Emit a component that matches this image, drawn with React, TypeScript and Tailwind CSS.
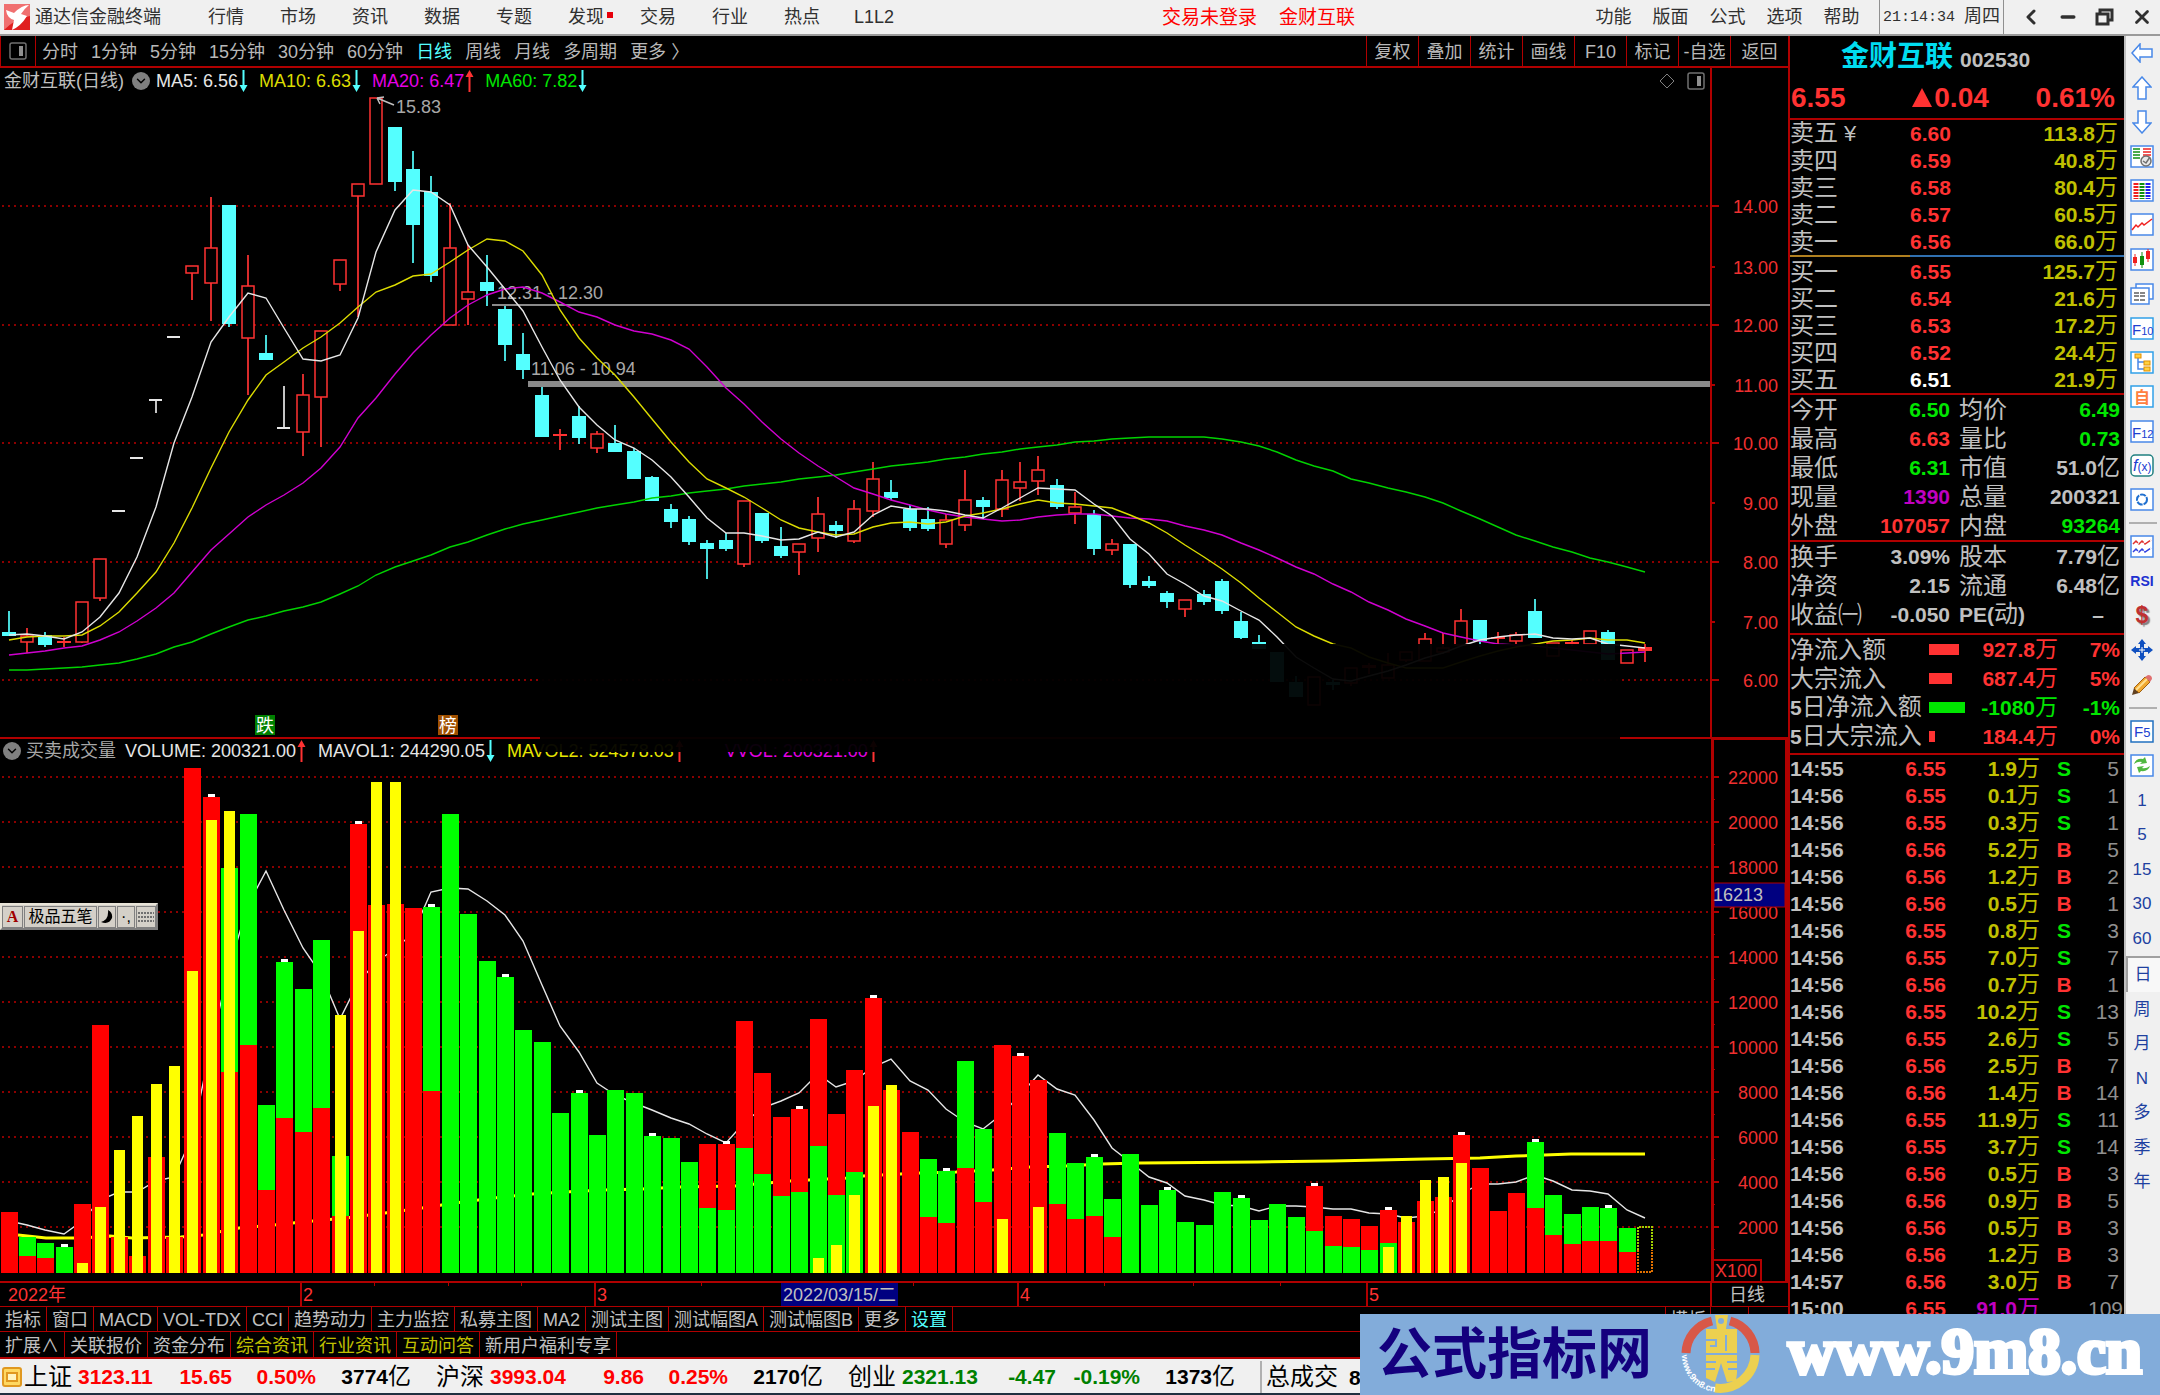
import type { ReactNode } from "react"
import { ChevronDown, ChevronLeft, Minus, X } from "lucide-react"

const RED = "#ff3232"
const CYAN = "#54ffff"
const FRAME = "#b00000"
const SANS = "'Liberation Sans', 'Noto Sans CJK SC', sans-serif"

const barX = (i: number) => Math.round(8.5 + 18.39 * i)

// [kind, body top, body bottom, high, low]; kind: u = up, d = down, f = flat up, w = limit day
type Candle = [string, number, number, number, number]
const candles: Candle[] = [
  ["d", 632, 636, 611, 636], ["u", 636, 642, 628, 653], ["d", 635, 645, 632, 647], ["f", 641, 643, 637, 647],
  ["u", 602, 642, 602, 643], ["u", 559, 598, 559, 601], ["w", 511, 511, 511, 511], ["w", 458, 458, 458, 458],
  ["w", 400, 400, 400, 413], ["w", 337, 337, 337, 337], ["u", 266, 273, 266, 300], ["u", 248, 283, 197, 321],
  ["d", 205, 324, 205, 327], ["u", 286, 338, 255, 395], ["d", 353, 360, 335, 360], ["w", 428, 428, 386, 428],
  ["u", 395, 432, 374, 456], ["u", 331, 397, 331, 447], ["u", 260, 284, 260, 291], ["u", 184, 196, 184, 317],
  ["u", 98, 184, 98, 184], ["d", 127, 182, 127, 191], ["d", 169, 225, 151, 263], ["d", 192, 276, 176, 282],
  ["u", 248, 325, 203, 325], ["u", 292, 299, 245, 325], ["d", 282, 291, 255, 306], ["d", 309, 345, 306, 361],
  ["d", 354, 370, 333, 379], ["d", 395, 437, 387, 437], ["f", 434, 436, 429, 450], ["d", 416, 438, 406, 444],
  ["u", 434, 448, 431, 453], ["d", 443, 452, 425, 452], ["d", 451, 479, 448, 479], ["d", 477, 501, 476, 501],
  ["d", 509, 522, 504, 528], ["d", 519, 542, 516, 545], ["d", 543, 549, 540, 579], ["d", 540, 549, 533, 551],
  ["u", 501, 564, 501, 567], ["d", 513, 541, 513, 543], ["d", 546, 556, 527, 558], ["u", 544, 552, 544, 575],
  ["u", 514, 538, 497, 552], ["d", 525, 531, 521, 538], ["u", 509, 541, 500, 543], ["u", 479, 511, 462, 517],
  ["d", 492, 498, 480, 500], ["d", 509, 528, 505, 531], ["d", 519, 529, 507, 531], ["u", 520, 544, 514, 548],
  ["u", 500, 525, 470, 531], ["d", 500, 507, 497, 519], ["u", 480, 509, 470, 517], ["u", 482, 488, 462, 501],
  ["u", 470, 481, 456, 495], ["d", 485, 507, 479, 509], ["u", 507, 513, 492, 524], ["d", 514, 549, 510, 555],
  ["u", 544, 550, 539, 555], ["d", 544, 585, 544, 588], ["d", 581, 586, 576, 588], ["d", 593, 602, 591, 608],
  ["u", 600, 609, 600, 617], ["d", 594, 602, 590, 605], ["d", 581, 611, 579, 614], ["d", 621, 638, 612, 639],
  ["d", 642, 649, 635, 649], ["d", 652, 682, 652, 682], ["d", 682, 697, 676, 697], ["u", 677, 705, 677, 705],
  ["d", 682, 685, 680, 690], ["u", 668, 683, 668, 686], ["f", 665, 668, 663, 674], ["u", 665, 678, 653, 678],
  ["u", 652, 660, 652, 662], ["u", 639, 661, 633, 661], ["u", 648, 652, 633, 654], ["u", 621, 645, 609, 646],
  ["d", 620, 641, 620, 647], ["f", 637, 639, 632, 644], ["u", 635, 641, 632, 644], ["d", 611, 638, 599, 638],
  ["u", 643, 656, 643, 656], ["f", 642, 644, 640, 646], ["u", 631, 644, 631, 644], ["d", 632, 660, 630, 660],
  ["u", 650, 663, 650, 663], ["f", 647, 651, 644, 662],
]

const ma5 = [
  635, 634, 636, 639, 632, 617, 593, 557, 507, 443, 397, 342, 317, 293, 298, 328, 359, 361, 355, 318, 252, 210, 190,
  192, 205, 245, 267, 289, 311, 347, 380, 407, 425, 440, 448, 460, 477, 497, 518, 533, 533, 536, 540, 539, 532, 537,
  532, 515, 506, 509, 509, 511, 515, 518, 508, 498, 488, 489, 490, 504, 516, 539, 554, 574, 584, 596, 601, 611, 620,
  637, 657, 668, 679, 681, 676, 671, 665, 658, 653, 646, 640, 637, 635, 634, 638, 639, 638, 644, 646, 648,
]
const ma10 = [
  640, 637, 636, 636, 635, 626, 612, 593, 572, 543, 508, 468, 432, 400, 375, 362, 348, 337, 323, 307, 292, 285, 276,
  274, 262, 250, 239, 241, 251, 275, 310, 338, 358, 375, 397, 419, 442, 462, 479, 488, 497, 508, 520, 528, 532, 535,
  534, 527, 523, 522, 524, 522, 516, 513, 509, 504, 500, 503, 504, 506, 508, 515, 523, 533, 545, 557, 569, 583, 598,
  612, 627, 636, 644, 648, 657, 663, 668, 668, 668, 662, 656, 651, 647, 644, 641, 640, 638, 640, 640, 643,
]
const ma20 = [
  655, 653, 651, 648, 646, 640, 632, 621, 608, 593, 572, 550, 534, 517, 505, 495, 483, 468, 447, 418, 398, 374, 353,
  335, 318, 305, 295, 289, 287, 293, 302, 312, 317, 325, 331, 334, 340, 349, 367, 388, 404, 422, 439, 453, 466, 477,
  488, 494, 500, 505, 510, 514, 517, 519, 521, 520, 517, 515, 514, 514, 516, 518, 519, 521, 526, 530, 535, 543, 550,
  558, 567, 574, 584, 592, 602, 610, 619, 626, 633, 637, 641, 644, 645, 646, 648, 650, 652, 654, 653, 652,
]
const ma60 = [
  670, 670, 669, 668, 667, 665, 663, 659, 654, 647, 642, 634, 627, 620, 616, 611, 607, 602, 594, 586, 575, 567, 561,
  555, 547, 542, 535, 529, 524, 520, 516, 512, 508, 505, 502, 498, 496, 493, 491, 489, 486, 484, 482, 479, 477, 475,
  472, 469, 466, 464, 462, 459, 457, 454, 452, 449, 447, 445, 442, 441, 439, 438, 437, 437, 437, 437, 439, 442, 446,
  452, 460, 466, 471, 479, 483, 488, 492, 497, 503, 511, 519, 527, 535, 541, 547, 552, 558, 562, 567, 572,
]

// [colour, total, lower part (opposite colour), yellow part]
type Bar = [string, number, number, number]
const volumes: Bar[] = [
  ["r", 61, 0, 0], ["g", 36, 17, 0], ["g", 30, 15, 0], ["g", 26, 0, 0], ["r", 69, 0, 10], ["r", 248, 0, 66],
  ["r", 36, 0, 123], ["r", 17, 0, 157], ["r", 116, 0, 189], ["r", 36, 0, 207], ["r", 505, 0, 302], ["r", 476, 0, 453],
  ["g", 405, 201, 462], ["g", 459, 228, 0], ["g", 168, 83, 0], ["g", 311, 155, 0], ["g", 284, 141, 0],
  ["g", 333, 165, 0], ["g", 117, 57, 258], ["r", 449, 0, 342], ["r", 368, 0, 491], ["r", 369, 0, 491],
  ["r", 365, 0, 0], ["g", 366, 182, 0], ["g", 459, 0, 0], ["g", 359, 0, 0], ["g", 312, 0, 0], ["g", 296, 0, 0],
  ["g", 243, 0, 0], ["g", 231, 0, 0], ["g", 160, 0, 0], ["g", 180, 0, 0], ["g", 138, 0, 0], ["g", 183, 0, 0],
  ["g", 180, 0, 0], ["g", 137, 0, 0], ["g", 135, 0, 0], ["g", 111, 0, 0], ["r", 129, 65, 0], ["r", 129, 63, 0],
  ["r", 252, 125, 0], ["r", 200, 99, 0], ["r", 156, 77, 0], ["r", 164, 81, 0], ["r", 254, 127, 15],
  ["r", 159, 78, 28], ["r", 203, 101, 78], ["r", 275, 0, 167], ["r", 183, 0, 188], ["r", 141, 0, 0],
  ["g", 114, 56, 0], ["g", 102, 50, 0], ["g", 212, 105, 0], ["g", 144, 71, 0], ["r", 228, 0, 54], ["r", 217, 0, 0],
  ["r", 193, 0, 66], ["g", 140, 69, 0], ["g", 110, 54, 0], ["g", 116, 57, 0], ["g", 74, 36, 0], ["g", 119, 0, 0],
  ["g", 68, 0, 0], ["g", 83, 0, 0], ["g", 51, 0, 0], ["g", 48, 0, 0], ["g", 81, 0, 0], ["g", 75, 0, 0],
  ["g", 53, 0, 0], ["g", 69, 0, 0], ["g", 56, 0, 0], ["r", 87, 42, 0], ["r", 57, 27, 0], ["r", 54, 26, 0],
  ["r", 47, 23, 0], ["r", 63, 30, 26], ["r", 51, 0, 57], ["r", 72, 0, 93], ["r", 76, 0, 96], ["r", 138, 0, 110],
  ["r", 105, 0, 0], ["r", 62, 0, 0], ["r", 80, 0, 0], ["g", 131, 65, 0], ["g", 78, 38, 0], ["g", 59, 29, 0],
  ["g", 66, 32, 0], ["g", 65, 32, 0], ["g", 45, 21, 0],
]
// every fourth bar carries a white marker on its top
const marked = (i: number) => i % 4 === 3 && volumes[i][3] <= volumes[i][1]

const mavol1 = [
  52, 48, 43, 39, 52, 73, 81, 81, 92, 96, 136, 228, 305, 368, 402, 363, 325, 299, 254, 290, 311, 324, 340, 381, 385,
  384, 372, 358, 332, 288, 247, 221, 190, 178, 170, 163, 155, 149, 139, 130, 150, 165, 172, 180, 199, 186, 192, 206,
  214, 192, 183, 164, 151, 144, 159, 178, 198, 184, 178, 153, 125, 111, 96, 90, 77, 73, 68, 67, 62, 67, 67, 66, 64,
  64, 60, 59, 55, 57, 64, 79, 89, 89, 91, 98, 92, 83, 82, 79, 63, 55,
]
const mavol2 =
  "18,1235 46,1238 82,1238 110,1236 132,1238 181,1237 203,1235 239,1228 274,1225 302,1222 346,1218 385,1213 422,1208 455,1203 494,1198 532,1194 565,1192 603,1190 642,1189 680,1187 735,1186 790,1181 827,1179 848,1178 863,1176 881,1175 920,1173 956,1172 992,1170 1030,1167 1066,1166 1101,1164 1140,1163 1258,1162 1332,1161 1425,1159 1480,1158 1516,1156 1571,1154 1645,1154"

const priceScale: [string, number][] = [
  ["14.00", 206], ["13.00", 267], ["12.00", 325], ["11.00", 385], ["10.00", 443], ["9.00", 503], ["8.00", 562],
  ["7.00", 622], ["6.00", 680],
]

function Line({ ys, color }: { ys: number[]; color: string }) {
  return <polyline points={ys.map((y, i) => `${barX(i)},${y}`).join(" ")} fill="none" stroke={color} strokeWidth="1.4" />
}

function CandleShape({ candle, index }: { candle: Candle; index: number }) {
  const [kind, top, bottom, high, low] = candle
  const x = barX(index)
  const color = kind === "w" ? "#e6e6e6" : kind === "d" ? CYAN : RED
  return (
    <g>
      {low > high && <rect x={x - 1} y={high} width="2" height={low - high} fill={color} opacity="0.85" />}
      {kind === "u" ? (
        <rect x={x - 6} y={top} width="12" height={Math.max(bottom - top, 2)} fill="#000" stroke={color} strokeWidth="1.5" />
      ) : (
        <rect x={x - 7} y={kind === "w" ? top - 1 : top} width={kind === "w" ? 13 : 14} height={Math.max(bottom - top, 2)} fill={color} />
      )}
    </g>
  )
}

function PriceChart() {
  return (
    <svg viewBox="0 94 1788 643" className="block w-full" fontFamily={SANS} fontSize="18">
      {priceScale.map(([label, y], i) => (
        <g key={label}>
          {i % 2 === 0 && <line x1="2" x2="1711" y1={y} y2={y} stroke={FRAME} strokeWidth="2" strokeDasharray="2 4" opacity="0.8" />}
          <rect x="1711" y={y - 1} width={i % 2 === 0 ? 8 : 4} height="2" fill={FRAME} />
          <text x="1778" y={y + 7} fill="#f03030" textAnchor="end">{label}</text>
        </g>
      ))}
      <rect x="1710" y="94" width="2" height="643" fill={FRAME} />
      <rect x="492" y="304" width="1218" height="2" fill="#8a8a8a" />
      <rect x="528" y="381" width="1182" height="6" fill="#8a8a8a" />
      {candles.map((c, i) => (
        <CandleShape key={i} candle={c} index={i} />
      ))}
      <text x="497" y="299" fill="#a8a8a8">12.31 - 12.30</text>
      <text x="531" y="375" fill="#a8a8a8">11.06 - 10.94</text>
      <Line ys={ma60} color="#00d200" />
      <Line ys={ma20} color="#d000d0" />
      <Line ys={ma10} color="#dcdc00" />
      <Line ys={ma5} color="#e6e6e6" />
      <path d="M394 105 L377 98 M377 98 L384 97 M377 98 L380 104" stroke="#c0c0c0" strokeWidth="1.5" fill="none" />
      <text x="396" y="113" fill="#a8a8a8">15.83</text>
      <rect x="255" y="715" width="20" height="20" fill="#008000" />
      <text x="256" y="732" fill="#fff">跌</text>
      <rect x="438" y="715" width="20" height="20" fill="#a05000" />
      <text x="439" y="732" fill="#fff">榜</text>
    </svg>
  )
}

const months: [string, number][] = [["2", 301], ["3", 595], ["4", 1018], ["5", 1367]]

function VolumeChart() {
  const base = 1273
  return (
    <svg viewBox="0 762 1788 545" className="block w-full" fontFamily={SANS} fontSize="18">
      {Array.from({ length: 11 }, (_, i) => {
        const y = 777 + 45 * i
        return (
          <g key={i}>
            <line x1="2" x2="1711" y1={y} y2={y} stroke={FRAME} strokeWidth="2" strokeDasharray="2 4" opacity="0.8" />
            <rect x="1713" y={y - 1} width="6" height="2" fill={FRAME} />
            <rect x="1713" y={y + 22} width="2" height="1" fill={FRAME} />
            <text x="1778" y={y + 7} fill="#f03030" textAnchor="end">{22000 - 2000 * i}</text>
          </g>
        )
      })}
      <Line ys={mavol1.map((h) => base - h)} color="#e6e6e6" />
      <polyline points={mavol2} fill="none" stroke="#ffff00" strokeWidth="3" />
      <g shapeRendering="crispEdges">
        {volumes.map(([color, total, lower, hot], i) => {
          const x = barX(i) - 8
          const main = color === "r" ? "#ff0000" : "#00ff00"
          const other = color === "r" ? "#00ff00" : "#ff0000"
          return (
            <g key={i}>
              <rect x={x} y={base - total} width="17" height={total} fill={main} />
              <rect x={x} y={base - lower} width="17" height={lower} fill={other} />
              <rect x={x + 3} y={base - hot} width="11" height={hot} fill="#ffff00" />
              {marked(i) && <rect x={x + 5} y={base - total - 3} width="7" height="3" fill="#fff" />}
            </g>
          )
        })}
      </g>
      <g fill="none" strokeWidth="2" strokeDasharray="2 1">
        <path d="M1638 1250 V1227 H1652 V1250" stroke="#a0d000" />
        <path d="M1638 1250 V1272 H1652 V1250" stroke="#e07000" />
      </g>
      <g fill={FRAME}>
        <rect x="1711" y="762" width="3" height="520" />
        <rect x="1785" y="762" width="3" height="520" />
        <rect x="0" y="1281" width="1788" height="2" />
        <rect x="0" y="1306" width="1788" height="1" />
        <rect x="1710" y="1281" width="2" height="26" />
        <rect x="1713" y="1259" width="48" height="2" />
        <rect x="1760" y="1259" width="2" height="22" />
        {[374, 448, 521, 701, 913, 1104, 1193, 1280].map((x) => (
          <rect key={x} x={x} y="1283" width="1" height="3" />
        ))}
        {months.map(([label, x]) => (
          <rect key={label} x={x - 1} y="1283" width="2" height="23" />
        ))}
      </g>
      <text x="1715" y="1277" fill="#f03030">X100</text>
      <rect x="1714" y="883" width="71" height="24" fill="#000080" stroke={FRAME} />
      <text x="1713" y="901" fill="#c0c0c0">16213</text>
      <text x="8" y="1301" fill={RED}>2022年</text>
      {months.map(([label, x]) => (
        <text key={label} x={x + 2} y="1301" fill={RED}>{label}</text>
      ))}
      <rect x="781" y="1283" width="117" height="23" fill="#000080" />
      <text x="783" y="1301" fill="#c0c0c0">2022/03/15/二</text>
      <text x="1729" y="1301" fill="#c0c0c0">日线</text>
    </svg>
  )
}

function Arrow({ up }: { up?: boolean }) {
  return (
    <svg width="9" height="24" viewBox="0 0 9 24" className={up ? "ml-[1px] shrink-0 text-[#ff3232]" : "ml-[1px] shrink-0 rotate-180 text-[#54ffff]"}>
      <path d="M3.5 8 V23 H5.5 V8 H8.5 L4.5 1 L0.5 8 Z" fill="currentColor" />
    </svg>
  )
}

function LegendDot() {
  return (
    <button aria-label="指标菜单" className="flex size-[18px] shrink-0 items-center justify-center rounded-full bg-[#808080] text-black">
      <ChevronDown size={14} strokeWidth={2.5} />
    </button>
  )
}

function PanelGlyph() {
  return (
    <svg width="18" height="18" viewBox="0 0 18 18" fill="none" stroke="#707070" strokeWidth="1.5">
      <rect x="1" y="1" width="16" height="16" rx="2" />
      <rect x="10" y="4" width="4" height="10" fill="#909090" stroke="none" />
    </svg>
  )
}

const menus = ["行情", "市场", "资讯", "数据", "专题", "发现", "交易", "行业", "热点", "L1L2"]

function TitleBar() {
  return (
    <header className="flex h-[36px] items-center border-b-2 border-[#9a9a9a] bg-[#f0f0f0] text-[18px] text-[#303030]">
      <svg width="26" height="26" viewBox="0 0 26 26" className="ml-[4px] shrink-0">
        <rect width="26" height="26" fill="#e02020" />
        <path d="M0 0 H26 V12 Q12 14 0 26 Z" fill="#f07070" />
        <path d="M2 6 L10 9 Q18 1 25 1 Q20 5 17 10 L23 12 Q17 22 8 26 L10 16 Q3 14 2 6 Z" fill="#fff" />
      </svg>
      <span className="w-[160px] shrink-0 pl-[5px]">通达信金融终端</span>
      <nav className="flex">
        {menus.map((m) => (
          <button key={m} className="relative w-[72px]">
            {m}
            {m === "发现" && <span className="absolute right-[9px] top-[4px] size-[6px] bg-red-600" />}
          </button>
        ))}
      </nav>
      <div className="flex flex-1 justify-center gap-[22px] pl-[22px] text-[19px] text-[#ff0000]">
        <span>交易未登录</span>
        <span>金财互联</span>
      </div>
      <nav className="flex">
        {["功能", "版面", "公式", "选项", "帮助"].map((m) => (
          <button key={m} className="w-[57px]">{m}</button>
        ))}
      </nav>
      <time className="ml-[9px] flex h-full w-[125px] items-center justify-center whitespace-nowrap border-x border-[#909090] font-[Liberation_Mono,Noto_Sans_CJK_SC,monospace] text-[15px]">
        21:14:34&nbsp;<span className="text-[18px]">周四</span>
      </time>
      <div className="ml-[8px] flex">
        <button aria-label="后退" className="flex w-[37px] justify-center"><ChevronLeft size={24} strokeWidth={3} /></button>
        <button aria-label="最小化" className="flex w-[37px] items-center justify-center"><Minus size={20} strokeWidth={4} /></button>
        <button aria-label="还原" className="flex w-[37px] items-center justify-center">
          <svg width="19" height="18" viewBox="0 0 19 18" fill="none" stroke="#303030" strokeWidth="3">
            <path d="M5 5 V2 H17 V12 H14" />
            <rect x="2" y="6" width="11" height="10" />
          </svg>
        </button>
        <button aria-label="关闭" className="flex w-[37px] items-center justify-center"><X size={22} strokeWidth={3} /></button>
      </div>
    </header>
  )
}

const periods = ["分时", "1分钟", "5分钟", "15分钟", "30分钟", "60分钟", "日线", "周线", "月线", "多周期", "更多 〉"]
const chartTools = ["复权", "叠加", "统计", "画线", "F10", "标记", "-自选", "返回"]

function PeriodBar() {
  return (
    <div className="flex h-[32px] border-b-2 border-[#b00000] text-[18px] text-[#b8b8b8]">
      <button aria-label="侧栏" className="flex w-[36px] items-center justify-center border-x border-[#b00000]">
        <PanelGlyph />
      </button>
      <div className="flex flex-1 items-center gap-[13px] whitespace-nowrap pl-[6px] pt-[2px]">
        {periods.map((p) => (
          <button key={p} className={p === "日线" ? "text-[#54ffff]" : ""}>{p}</button>
        ))}
      </div>
      <div className="flex">
        {chartTools.map((t) => (
          <button key={t} className="w-[52px] whitespace-nowrap border-l border-[#b00000] pt-[2px] last:w-[58px]">{t}</button>
        ))}
      </div>
    </div>
  )
}

function Charts() {
  return (
    <section className="relative">
      <div className="flex h-[26px] text-[18px]">
        <div className="flex flex-1 items-center border-r-2 border-[#b00000] pl-[4px]">
          <span className="mr-[8px] text-[#c0c0c0]">金财互联(日线)</span>
          <LegendDot />
          <span className="ml-[6px] text-[#e6e6e6]">MA5: 6.56</span>
          <Arrow />
          <span className="ml-[11px] text-[#dcdc00]">MA10: 6.63</span>
          <Arrow />
          <span className="ml-[11px] text-[#e600e6]">MA20: 6.47</span>
          <Arrow up />
          <span className="ml-[11px] text-[#00e600]">MA60: 7.82</span>
          <Arrow />
          <div className="ml-auto mr-[5px] flex items-center gap-[12px]">
            <svg width="16" height="16" viewBox="0 0 16 16" fill="none" stroke="#808080"><path d="M8 1 L15 8 L8 15 L1 8 Z" /></svg>
            <PanelGlyph />
          </div>
        </div>
        <div className="w-[76px]" />
      </div>
      <PriceChart />
      <div className="flex h-[25px] border-t-2 border-[#b00000] text-[18px]">
        <div className="flex flex-1 items-center pl-[3px]">
          <LegendDot />
          <span className="ml-[5px] text-[#a8a8a8]">买卖成交量</span>
          <span className="ml-[9px] text-[#e6e6e6]">VOLUME: 200321.00</span>
          <Arrow up />
          <span className="ml-[12px] text-[#e6e6e6]">MAVOL1: 244290.05</span>
          <Arrow />
          <span className="ml-[12px] text-[#e6e600]">MAVOL2: 524578.03</span>
          <Arrow up />
          <span className="ml-[41px] text-[#e600e6]">VVOL: 200321.00</span>
          <Arrow up />
        </div>
        <div className="w-[77px] border-x-3 border-t border-[#b00000]" />
      </div>
      <VolumeChart />
      {/* dark veil over the lower part of the price pane */}
      <div className="pointer-events-none absolute left-[540px] top-[576px] h-[108px] w-[1080px] bg-black/95" />
      {/* input method bar */}
      <div className="absolute left-0 top-[835px] flex h-[27px] w-[158px] items-center gap-[1px] border-2 border-[#e8e4d8] border-b-[#808080] border-r-[#808080] bg-[#d4d0c8] text-[16px] text-black">
        <button className="w-[21px] border border-[#808080] font-[Liberation_Serif,serif] font-bold leading-[20px] text-[#a00000]">A</button>
        <button className="flex-1 whitespace-nowrap border border-[#808080] leading-[20px]">极品五笔</button>
        <button aria-label="半角" className="flex h-[22px] w-[18px] items-center justify-center border border-[#808080]">
          <svg width="12" height="14" viewBox="0 0 12 14"><path d="M7 0 Q12 3 11 8 Q8 15 0 12 Q8 10 7 0 Z" /></svg>
        </button>
        <button className="w-[18px] border border-[#808080] leading-[20px]">·,</button>
        <button aria-label="软键盘" className="flex h-[22px] w-[20px] items-center justify-center border border-[#808080]">
          <svg width="16" height="12" viewBox="0 0 16 12" stroke="#707070" strokeWidth="2" strokeDasharray="2 1"><path d="M0 2 H16 M0 6 H16 M0 10 H16" /></svg>
        </button>
      </div>
    </section>
  )
}

const tabs = ["指标", "窗口", "MACD", "VOL-TDX", "CCI", "趋势动力", "主力监控", "私募主图", "MA2", "测试主图", "测试幅图A", "测试幅图B", "更多", "设置"]
const links = ["扩展∧", "关联报价", "资金分布", "综合资讯", "行业资讯", "互动问答", "新用户福利专享"]

function BottomTabs() {
  return (
    <div className="text-[18px] text-[#c0c0c0]">
      <div className="flex h-[25px] border-b border-[#b00000]">
        {tabs.map((t) => (
          <button key={t} className={`whitespace-nowrap border-r border-[#b00000] px-[5px] pt-[2px] leading-[22px] ${t === "设置" ? "text-[#54ffff]" : ""}`}>{t}</button>
        ))}
        <button className="ml-auto w-[46px] border-x border-[#b00000] pt-[2px] leading-[22px]">模板</button>
        <button className="w-[38px] border-r border-[#b00000] pt-[2px] leading-[22px]">+</button>
        <button className="w-[39px] pt-[2px] leading-[22px]">−</button>
      </div>
      <div className="flex h-[27px] border-b-2 border-[#b00000]">
        {links.map((t, i) => (
          <button key={t} className={`whitespace-nowrap border-r border-[#b00000] px-[5px] pt-[3px] leading-[22px] ${i > 2 && i < 6 ? "text-[#c0c000]" : ""}`}>{t}</button>
        ))}
      </div>
    </div>
  )
}

// number in bold, Chinese unit in regular weight
function Num({ children }: { children: string }) {
  const unit = /[万亿]$/.test(children) ? children.slice(-1) : ""
  return (
    <>
      <b>{unit ? children.slice(0, -1) : children}</b>
      {unit && <span className="text-[23px] leading-none">{unit}</span>}
    </>
  )
}

const asks = [["卖五", "6.60", "113.8万"], ["卖四", "6.59", "40.8万"], ["卖三", "6.58", "80.4万"], ["卖二", "6.57", "60.5万"], ["卖一", "6.56", "66.0万"]]
const bids = [["买一", "6.55", "125.7万"], ["买二", "6.54", "21.6万"], ["买三", "6.53", "17.2万"], ["买四", "6.52", "24.4万"], ["买五", "6.51", "21.9万"]]

function Book({ rows }: { rows: string[][] }) {
  return (
    <table className="w-full table-fixed">
      <tbody>
        {rows.map(([name, price, vol]) => (
          <tr key={name} className="h-[27px]">
            <th className="w-[120px] p-0 text-left text-[24px] font-normal leading-[26px] text-[#c0c0c0]">
              {name}{name === "卖五" && <span className="ml-[6px] text-[22px]">¥</span>}
            </th>
            <td className={price === "6.51" ? "w-[50px] p-0 text-white" : "w-[50px] p-0 text-[#ff3232]"}><b>{price}</b></td>
            <td className="whitespace-nowrap p-0 pr-[6px] text-right leading-[26px] text-[#c0c000]"><Num>{vol}</Num></td>
          </tr>
        ))}
      </tbody>
    </table>
  )
}

const G = "text-[#00e600]"
const R = "text-[#ff3232]"
const W = "text-[#c0c0c0]"
const M = "text-[#c000c0]"
const stats = [
  ["今开", "6.50", G, "均价", "6.49", G], ["最高", "6.63", R, "量比", "0.73", G], ["最低", "6.31", G, "市值", "51.0亿", W],
  ["现量", "1390", M, "总量", "200321", W], ["外盘", "107057", R, "内盘", "93264", G],
]
const basics = [
  ["换手", "3.09%", W, "股本", "7.79亿", W], ["净资", "2.15", W, "流通", "6.48亿", W], ["收益㈠", "-0.050", W, "PE(动)", "–", W],
]

function Stats({ rows }: { rows: string[][] }) {
  return (
    <table className="w-full table-fixed">
      <tbody>
        {rows.map(([a, av, ac, b, bv, bc]) => (
          <tr key={a} className="h-[29px]">
            <th className="w-[72px] whitespace-nowrap p-0 text-left text-[24px] font-normal leading-[28px] text-[#c0c0c0]">{a}</th>
            <td className={`w-[88px] p-0 text-right ${ac}`}><Num>{av}</Num></td>
            <th className="w-[76px] whitespace-nowrap p-0 pl-[9px] text-left text-[24px] font-normal leading-[28px] text-[#c0c0c0]">
              {b === "PE(动)" ? <><b className="text-[21px]">PE(</b>动<b className="text-[21px]">)</b></> : b}
            </th>
            <td className={`whitespace-nowrap p-0 text-right ${bc} ${bv === "–" ? "pr-[20px]" : "pr-[4px]"}`}><Num>{bv}</Num></td>
          </tr>
        ))}
      </tbody>
    </table>
  )
}

const flows: [string, number, string, string, string, string][] = [
  ["净流入额", 30, "927.8万", "7%", R, "bg-[#ff3232]"],
  ["大宗流入", 23, "687.4万", "5%", R, "bg-[#ff3232]"],
  ["5日净流入额", 36, "-1080万", "-1%", G, "bg-[#00e600]"],
  ["5日大宗流入", 6, "184.4万", "0%", R, "bg-[#ff3232]"],
]

const ticks = [
  ["14:55", "6.55", "1.9万", "S", "5"], ["14:56", "6.55", "0.1万", "S", "1"], ["14:56", "6.55", "0.3万", "S", "1"],
  ["14:56", "6.56", "5.2万", "B", "5"], ["14:56", "6.56", "1.2万", "B", "2"], ["14:56", "6.56", "0.5万", "B", "1"],
  ["14:56", "6.55", "0.8万", "S", "3"], ["14:56", "6.55", "7.0万", "S", "7"], ["14:56", "6.56", "0.7万", "B", "1"],
  ["14:56", "6.55", "10.2万", "S", "13"], ["14:56", "6.55", "2.6万", "S", "5"], ["14:56", "6.56", "2.5万", "B", "7"],
  ["14:56", "6.56", "1.4万", "B", "14"], ["14:56", "6.55", "11.9万", "S", "11"], ["14:56", "6.55", "3.7万", "S", "14"],
  ["14:56", "6.56", "0.5万", "B", "3"], ["14:56", "6.56", "0.9万", "B", "5"], ["14:56", "6.56", "0.5万", "B", "3"],
  ["14:56", "6.56", "1.2万", "B", "3"], ["14:57", "6.56", "3.0万", "B", "7"], ["15:00", "6.55", "91.0万", "", "109"],
]

function QuotePanel() {
  return (
    <aside className="w-[336px] shrink-0 border-l-2 border-[#b00000] text-[21px]">
      <div className="flex h-[41px] items-center gap-[7px] pl-[51px] pt-[1px]">
        <h1 className="text-[28px] font-bold leading-none text-[#00dcf0]">金财互联</h1>
        <span className="pt-[4px] font-bold leading-none text-[#c0c0c0]">002530</span>
      </div>
      <div className="flex h-[43px] items-center justify-between border-b-2 border-[#b00000] pl-[1px] pr-[9px] text-[28px] font-bold text-[#ff3232]">
        <span>6.55</span>
        <span className="flex items-center gap-[2px] pl-[20px]">
          <svg width="20" height="19" viewBox="0 0 20 19"><path d="M10 0 L20 19 H0 Z" fill={RED} /></svg>0.04
        </span>
        <span>0.61%</span>
      </div>
      <Book rows={asks} />
      <div className="mb-[1px] flex h-[2px]">
        <div className="w-[120px] bg-[#b08020]" />
        <div className="flex-1 bg-[#3070b0]" />
      </div>
      <Book rows={bids} />
      <div className="border-t-2 border-[#b00000]"><Stats rows={stats} /></div>
      <div className="border-t-2 border-[#b00000] pb-[4px]"><Stats rows={basics} /></div>
      <div className="border-y-2 border-[#b00000] pb-[2px]">
        {flows.map(([name, width, amount, pct, color, bar]) => (
          <div key={name} className={`flex h-[29px] items-center pr-[4px] ${color}`}>
            <span className="w-[139px] whitespace-nowrap text-[24px] leading-[28px] text-[#c0c0c0]">
              {name.startsWith("5") ? <><b className="text-[21px]">5</b>{name.slice(1)}</> : name}
            </span>
            <span className="w-[36px]"><span className={`block h-[11px] ${bar}`} style={{ width }} /></span>
            <span className="w-[93px] whitespace-nowrap text-right leading-[28px]"><Num>{amount}</Num></span>
            <b className="flex-1 text-right">{pct}</b>
          </div>
        ))}
      </div>
      <table className="w-full table-fixed">
        <tbody>
          {ticks.map(([time, price, amount, side, count], i) => (
            <tr key={i} className="h-[27px] leading-[26px]">
              <td className="w-[80px] p-0 font-bold text-[#c0c0c0]">{time}</td>
              <td className="w-[76px] p-0 text-right font-bold text-[#ff3232]">{price}</td>
              <td className={`w-[94px] whitespace-nowrap p-0 text-right ${side ? "text-[#c0c000]" : "text-[#c000c0]"}`}><Num>{amount}</Num></td>
              <td className={`w-[48px] p-0 text-center font-bold ${side === "S" ? "text-[#00e600]" : "text-[#ff3232]"}`}>{side}</td>
              <td className="p-0 pr-[5px] text-right text-[#909090]">{count}</td>
            </tr>
          ))}
        </tbody>
      </table>
    </aside>
  )
}

function Boxed({ children, stroke = "#4888e8", rx = 0 }: { children: ReactNode; stroke?: string; rx?: number }) {
  return (
    <svg width="24" height="23" viewBox="0 0 24 23" fontFamily={SANS}>
      <rect x="1" y="1" width="22" height="21" rx={rx} fill="#fff" stroke={stroke} strokeWidth="1.5" />
      {children}
    </svg>
  )
}

const outline = { fill: "#fff", stroke: "#4888e8", strokeWidth: 1.5 }
const topTools: [string, ReactNode][] = [
  ["后退", <svg width="22" height="20" viewBox="0 0 22 20"><path d="M1 10 L9 1 V6 H21 V14 H9 V19 Z" {...outline} /></svg>],
  ["向上", <svg width="20" height="24" viewBox="0 0 20 24"><path d="M10 1 L19 11 H14 V23 H6 V11 H1 Z" {...outline} /></svg>],
  ["向下", <svg width="20" height="24" viewBox="0 0 20 24"><path d="M10 23 L19 13 H14 V1 H6 V13 H1 Z" {...outline} /></svg>],
  ["自选报价", <Boxed>
    <path d="M3 4 H10 M3 7 H10 M3 10 H10 M3 13 H10" stroke="#109010" strokeWidth="1.5" />
    <path d="M13 4 H21 M13 7 H21 M13 10 H21" stroke="#f02020" strokeWidth="1.5" />
    <circle cx="16" cy="16" r="5" fill="#e8e8e8" stroke="#707070" strokeWidth="1.5" /><path d="M13 16 L16 18 L20 12" stroke="#707070" fill="none" strokeWidth="1.5" />
  </Boxed>],
  ["行情表", <Boxed>
    <g strokeWidth="5" strokeDasharray="2 1"><path d="M6 4 V20" stroke="#f02020" /><path d="M12 4 V20" stroke="#109010" /><path d="M18 4 V20" stroke="#2020f0" /></g>
  </Boxed>],
  ["分时图", <Boxed><path d="M2 17 L6 12 L8 14 L12 10 L14 12 L22 6" fill="none" stroke="#f02020" strokeWidth="1.5" /></Boxed>],
  ["K线图", <Boxed>
    <path d="M5 6 V18 M18 1 V14" stroke="#f02020" /><path d="M12 4 V20" stroke="#109010" />
    <rect x="3" y="9" width="4" height="6" fill="#f02020" /><rect x="10" y="8" width="4" height="9" fill="#109010" /><rect x="16" y="3" width="4" height="8" fill="#f02020" />
  </Boxed>],
  ["资料", <svg width="24" height="22" viewBox="0 0 24 22">
    <rect x="6" y="1" width="17" height="15" {...outline} /><rect x="1" y="5" width="18" height="16" {...outline} />
    <path d="M4 10 H16 M4 13 H16 M4 17 H16" stroke="#606060" strokeWidth="1.5" strokeDasharray="5 1" />
  </svg>],
  ["F10", <Boxed stroke="#30a0e8"><text x="2" y="18" fontSize="15" fill="#2040d0">F<tspan fontSize="11">10</tspan></text></Boxed>],
  ["板块树", <Boxed stroke="#30a0e8">
    <path d="M8 7 V18 H14 M8 11 H14" fill="none" stroke="#4888e8" strokeWidth="1.5" />
    <g fill="#ffd040" stroke="#e09000"><rect x="5" y="3" width="6" height="4" /><rect x="14" y="10" width="6" height="4" /><rect x="14" y="16" width="6" height="4" /></g>
  </Boxed>],
  ["自选", <Boxed stroke="#30a0e8"><text x="4" y="18" fontSize="16" fontWeight="bold" fill="#ff8040">自</text></Boxed>],
  ["F12", <Boxed><text x="2" y="18" fontSize="15" fill="#2040d0">F<tspan fontSize="11">12</tspan></text></Boxed>],
  ["公式", <Boxed stroke="#208080" rx={4}><text x="3" y="17" fontSize="16" fontStyle="italic" fill="#2040d0">f<tspan fontSize="12" fontStyle="normal">(x)</tspan></text></Boxed>],
  ["刷新", <Boxed><circle cx="12" cy="11.5" r="5" fill="none" stroke="#2070d0" strokeWidth="2" strokeDasharray="6 1" /></Boxed>],
]
const midTools: [string, ReactNode][] = [
  ["多股同列", <Boxed>
    <g fill="none" strokeWidth="1.5" strokeDasharray="7 1"><path d="M3 9 L6 6 L9 9 L12 6 L15 9 L21 5" stroke="#e03030" /><path d="M3 17 L6 14 L9 17 L12 14 L15 17 L21 13" stroke="#3040e0" /></g>
  </Boxed>],
  ["RSI", <span className="text-[14px] font-bold text-[#2030d0]">RSI</span>],
  ["财务", <span className="text-[23px] font-bold text-[#c03030] [text-shadow:2px_2px_1px_#808080]">$</span>],
  ["移动", <svg width="22" height="22" viewBox="0 0 22 22" fill="#1050c0">
    <path d="M11 0 L15 5 H7 Z M11 22 L15 17 H7 Z M0 11 L5 7 V15 Z M22 11 L17 7 V15 Z" />
    <path d="M4 11 H18 M11 4 V18" stroke="#1050c0" strokeWidth="4" /><path d="M8 11 H14 M11 8 V14" stroke="#fff" />
  </svg>],
  ["画笔", <svg width="22" height="22" viewBox="0 0 22 22">
    <path d="M1 21 L3 14 L8 19 Z" fill="#604020" /><path d="M3 14 L14 3 L19 8 L8 19 Z" fill="#f0a830" stroke="#a06010" />
    <path d="M14 3 L17 1 Q21 1 21 5 L19 8 Z" fill="#e07070" /><path d="M5 16 L16 5" stroke="#ffe090" strokeWidth="2" />
  </svg>],
]
const periodTools: [string, ReactNode][] = [
  ["F5", <Boxed stroke="#2070c0"><text x="4" y="17" fontSize="15" fill="#2040d0">F<tspan fontSize="13">5</tspan></text></Boxed>],
  ["切换", <Boxed>
    <path d="M4 10 Q6 4 13 5 L15 3 L17 9 L10 10 L12 8 Q8 7 4 10 Z" fill="#50b840" /><path d="M20 12 Q18 18 11 17 L9 19 L7 13 L14 12 L12 14 Q16 15 20 12 Z" fill="#50b840" />
  </Boxed>],
  ...["1", "5", "15", "30", "60", "日", "周", "月", "N", "多", "季", "年"].map((t): [string, ReactNode] => [t, t]),
]

function ToolGroup({ items, height }: { items: [string, ReactNode][]; height: string }) {
  return (
    <div className={`flex flex-col ${height}`}>
      {items.map(([label, icon]) => (
        <button
          key={label}
          aria-label={label}
          className={`flex flex-1 items-center justify-center pr-[2px] ${label === "日" ? "border-l-2 border-t-2 border-[#a0a0a0] bg-[#f8f8f8]" : ""}`}
        >
          {icon}
        </button>
      ))}
    </div>
  )
}

function ToolRail() {
  return (
    <nav className="w-[36px] shrink-0 border-l-2 border-[#c0c0c0] bg-[#f0f0f0] text-[17px] text-[#2040a0]">
      <ToolGroup items={topTools} height="h-[481px]" />
      <hr className="mx-[3px] my-[5px] border-t-2 border-[#b0b0b0]" />
      <ToolGroup items={midTools} height="h-[173px]" />
      <hr className="mx-[3px] my-[5px] border-t-2 border-[#b0b0b0]" />
      <ToolGroup items={periodTools} height="h-[485px]" />
    </nav>
  )
}

const indices = [
  ["上证", "3123.11", "15.65", "0.50%", "3774亿", "text-[#ff0000]"],
  ["沪深", "3993.04", "9.86", "0.25%", "2170亿", "text-[#ff0000]"],
  ["创业", "2321.13", "-4.47", "-0.19%", "1373亿", "text-[#008000]"],
]

function StatusBar() {
  return (
    <footer className="flex h-[36px] items-center whitespace-nowrap border-b-2 border-[#203040] bg-[#f0f0f0] pt-[2px] text-[21px] text-black">
      <svg width="20" height="20" viewBox="0 0 20 20" className="mx-[2px] shrink-0">
        <rect x="1" y="1" width="18" height="18" rx="2" fill="#ffd860" stroke="#e09820" strokeWidth="2" />
        <rect x="5" y="6" width="10" height="8" fill="#fff4c0" stroke="#e09820" strokeWidth="2" />
      </svg>
      {indices.map(([name, value, change, pct, amount, color]) => (
        <div key={name} className="grid w-[412px] grid-cols-[54px_100px_54px_84px_95px] items-center leading-[32px]">
          <span className="text-[24px]">{name}</span>
          <b className={color}>{value}</b>
          <b className={`text-right ${color}`}>{change}</b>
          <b className={`text-right ${color}`}>{pct}</b>
          <span className="text-right"><Num>{amount}</Num></span>
        </div>
      ))}
      <div className="flex h-full items-center gap-[11px] border-l-2 border-[#b0b0b0] pl-[4px]">
        <span className="text-[24px]">总成交</span>
        <span><Num>8229亿</Num></span>
      </div>
    </footer>
  )
}

function SiteBanner() {
  return (
    <div className="absolute bottom-0 right-0 flex h-[81px] w-[800px] items-center bg-[#82acda]">
      <span className="w-[320px] whitespace-nowrap pl-[17px] text-[55px] font-bold leading-none text-[#14007e]">公式指标网</span>
      <svg width="80" height="80" viewBox="0 0 80 80" className="shrink-0 overflow-visible">
        <defs>
          <path id="ring" d="M2 40 A37 37 0 0 0 36 77" />
        </defs>
        <path d="M6 38 A34 34 0 0 1 32 6" fill="none" stroke="#d85848" strokeWidth="9" />
        <path d="M50 6 A34 34 0 0 1 75 38" fill="none" stroke="#d85848" strokeWidth="9" />
        <path d="M75 40 A35 35 0 0 1 35 73" fill="none" stroke="#ecd050" strokeWidth="9" />
        <path d="M35 0 H48 L46 14 H57 V38 H26 V14 H37 Z" fill="#ecd050" />
        <path d="M26 40 H57 V58 L56 66 L47 67 L41 48 L35 67 L26 63 Z" fill="#ecd050" />
        <circle cx="41" cy="6" r="3" fill="#82acda" />
        <path d="M26 25 H36 V31 H30 M46 20 V36 M26 47 H36 M26 54 H35 M47 47 H57 M48 54 H57" fill="none" stroke="#82acda" strokeWidth="2" />
        <text fontSize="9" fontWeight="bold" fill="#fff" fontFamily="Liberation Sans, sans-serif"><textPath href="#ring">www.9m8.cn</textPath></text>
      </svg>
      <span className="ml-[28px] pb-[6px] font-[Liberation_Serif,serif] text-[65px] font-bold leading-none text-white [-webkit-text-stroke:4px_white]">www.9m8.cn</span>
    </div>
  )
}

export default function App() {
  return (
    <div className="relative overflow-hidden bg-black font-[Liberation_Sans,Noto_Sans_CJK_SC,sans-serif] leading-none">
      <TitleBar />
      <div className="flex">
        <main className="min-w-0 flex-1">
          <PeriodBar />
          <Charts />
          <BottomTabs />
        </main>
        <QuotePanel />
        <ToolRail />
      </div>
      <StatusBar />
      <SiteBanner />
    </div>
  )
}
